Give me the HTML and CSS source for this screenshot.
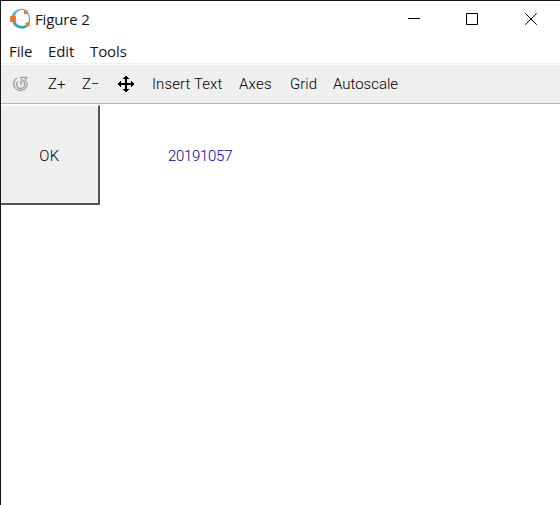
FILE: index.html
```html
<!DOCTYPE html>
<html lang="en">
<head>
<meta charset="utf-8">
<title>Figure 2</title>
<link rel="stylesheet" href="styles.css">
</head>
<body>
<div class="window">
  <header class="titlebar">
    <svg class="logo" width="22" height="22" viewBox="0 0 22 22">
      <defs><linearGradient id="ring" x1="0" y1="0" x2="1" y2="1"><stop offset="0" stop-color="#66c3dd"/><stop offset="1" stop-color="#2387b2"/></linearGradient></defs>
      <path fill="url(#ring)" fill-rule="evenodd" d="M11 1C17 0 21 5 21 11.500S17 21 12 20.500C6 20 2 15 2.500 9.500C3 5 6 1.500 11 1ZM12.500 2C8 2.500 6 6 6 10.500C6 15 9 18 13 18C17.500 18 20 15 20 10.500S16.500 1.500 12.500 2Z"/>
      <path fill="#fb7624" d="M1 8h6v6H1zM15 2.500h3.500v3.500H15zM16.500 14.500h4v4h-4z"/>
    </svg>
    <h1 class="title">Figure 2</h1>
    <div class="controls">
      <svg width="12" height="12" viewBox="0 0 12 12"><path d="M0 5.500h12"/></svg>
      <svg width="12" height="12" viewBox="0 0 12 12"><path d="M.5.500h11v11H.5z"/></svg>
      <svg width="12" height="12" viewBox="0 0 12 12"><path d="M.3.300l11.400 11.400M11.700.300L.3 11.700"/></svg>
    </div>
  </header>
  <nav class="menubar"><span class="file">File</span><span class="edit">Edit</span><span class="tools">Tools</span></nav>
  <div class="toolbar">
    <svg class="rotate" width="18" height="18" viewBox="0 0 18 18">
      <path class="halo" d="M5 3A6.700 6.700 0 1 0 14.800 7M6 6.500A4 4 0 1 0 12.300 8M9 10V5.500M8 2.500h6.500L12.500 7.500L9 4"/>
      <path class="line" d="M5 3A6.700 6.700 0 1 0 14.800 7M6 6.500A4 4 0 1 0 12.300 8M9 10V5.500M8 2.500h6.500L12.500 7.500L9 4"/>
    </svg>
    <span class="zoom-in">Z+</span><span class="zoom-out">Z−</span>
    <svg class="move" width="16" height="16" viewBox="0 0 16 16"><path d="M7 3H5V2h1V1h1V0h2v1h1v1h1v1H9v4h4V5h1v1h1v1h1v2h-1v1h-1v1h-1V9H9v4h2v1h-1v1H9v1H7v-1H6v-1H5v-1h2V9H3v2H2v-1H1V9H0V7h1V6h1V5h1v2h4z"/></svg>
    <span class="insert">Insert Text</span><span class="axes">Axes</span><span class="grid">Grid</span><span class="autoscale">Autoscale</span>
  </div>
  <main class="figure"><button class="ok">OK</button><span class="value">20191057</span></main>
</div>
</body>
</html>
```
FILE: styles.css
```css
* { box-sizing: border-box; }
body { margin: 0; overflow: hidden; background: #fff; color: #000; }
.window { height: 505px; border: solid #171717; border-width: 1px 0 0 1px; display: flex; flex-direction: column; }
.titlebar { height: 36px; display: flex; align-items: center; padding-left: 8px; flex: none; }
.logo { flex: none; margin-right: 4px; }
.title { margin: 0; font: 400 15px/20px "Open Sans", sans-serif; letter-spacing: -.15px; color: #161616; }
.controls { margin-left: auto; margin-right: 23px; display: flex; gap: 47px; fill: none; stroke: #000; stroke-width: 1; }
.controls svg:first-child { margin-right: -1px; }
.menubar { height: 26px; flex: none; display: flex; font: 400 15px/29px "Open Sans", sans-serif; padding-left: 8px; color: #161616; }
.file { width: 39px; letter-spacing: -.1px; }
.edit { width: 42px; letter-spacing: -.1px; }
.tools { letter-spacing: -.1px; }
.toolbar { height: 41px; flex: none; display: flex; align-items: center; padding-left: 11px; background: #efefef; border-top: 1px solid #f0f0f0; border-bottom: 1px solid #b5b5b5; box-shadow: inset 0 1px #fff; font: 300 15px/20px Roboto, sans-serif; white-space: nowrap; }
.rotate { flex: none; margin-right: 18px; fill: none; }
.halo { stroke: #d2d2d2; stroke-width: 2; }
.line { stroke: #8e8e8e; stroke-width: .9; }
.zoom-in { width: 34px; }
.zoom-out { width: 36px; }
.move { flex: none; margin-right: 18px; }
.insert { width: 87px; letter-spacing: .1px; }
.axes { width: 51px; letter-spacing: .2px; }
.grid { width: 43px; }
.figure { flex: 1; display: flex; align-items: flex-start; padding-top: 1px; }
.ok { width: 99px; height: 100px; padding: 3px 0 0; margin: 0; background: #efefef; border: solid; border-width: 1px 2px 2px 0; border-color: #fff #555 #555 #fff; border-radius: 0; color: #000; font: 300 15px/20px Roboto, sans-serif; letter-spacing: .4px; }
.value { margin: 41px 0 0 68px; color: #0000a0; font: 300 15px/20px Roboto, sans-serif; letter-spacing: -.3px; }
```
